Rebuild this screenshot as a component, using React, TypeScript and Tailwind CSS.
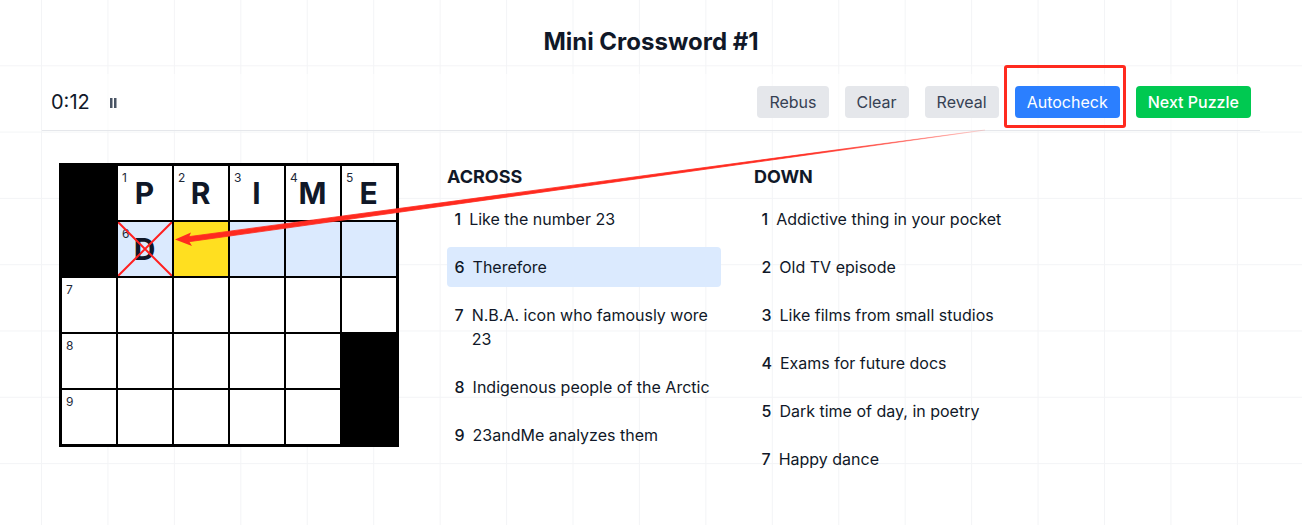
const across = [
  [1, 'Like the number 23'],
  [6, 'Therefore'],
  [7, 'N.B.A. icon who famously wore 23'],
  [8, 'Indigenous people of the Arctic'],
  [9, '23andMe analyzes them'],
] as const;

const down = [
  [1, 'Addictive thing in your pocket'],
  [2, 'Old TV episode'],
  [3, 'Like films from small studios'],
  [4, 'Exams for future docs'],
  [5, 'Dark time of day, in poetry'],
  [7, 'Happy dance'],
] as const;

type Cell = { black?: boolean; num?: number; letter?: string; tone?: 'word' | 'active'; crossed?: boolean };

const cells: Cell[] = [
  { black: true },
  { num: 1, letter: 'P' },
  { num: 2, letter: 'R' },
  { num: 3, letter: 'I' },
  { num: 4, letter: 'M' },
  { num: 5, letter: 'E' },
  { black: true },
  { num: 6, letter: 'D', tone: 'word', crossed: true },
  { tone: 'active' },
  { tone: 'word' },
  { tone: 'word' },
  { tone: 'word' },
  { num: 7 },
  {},
  {},
  {},
  {},
  {},
  { num: 8 },
  {},
  {},
  {},
  {},
  { black: true },
  { num: 9 },
  {},
  {},
  {},
  {},
  { black: true },
];

function GridCell({ cell }: { cell: Cell }) {
  if (cell.black) return <div className="h-14 w-14 border border-black bg-black" />;
  const bg = cell.tone === 'word' ? 'bg-blue-100' : cell.tone === 'active' ? 'bg-yellow-300' : 'bg-white';
  return (
    <div className={`relative flex h-14 w-14 items-center justify-center border border-black pr-px text-[30px] font-bold text-gray-900 ${bg}`}>
      {cell.num && <span className="absolute left-1 top-1 text-xs leading-4 font-normal text-gray-800">{cell.num}</span>}
      {cell.letter}
      {cell.crossed && (
        <svg className="absolute inset-0" width="54" height="54" viewBox="0 0 54 54">
          <path d="M0 0L54 54M54 0L0 54" stroke="#ff2020" strokeWidth="2" />
        </svg>
      )}
    </div>
  );
}

function ClueList({ title, clues, active }: { title: string; clues: readonly (readonly [number, string])[]; active?: number }) {
  return (
    <div className="w-[274px]">
      <h2 className="mb-2 text-lg leading-7 font-bold text-gray-900">{title}</h2>
      <ul className="flex flex-col gap-2">
        {clues.map(([n, text]) => (
          <li key={n} className={`flex rounded py-2 pr-2 pl-[7.5px] text-base leading-6 text-gray-900 ${n === active ? 'bg-blue-100' : ''}`}>
            <span className="mr-2 font-medium">{n}</span>
            <span>{text}</span>
          </li>
        ))}
      </ul>
    </div>
  );
}

export default function App() {
  return (
    <div className="relative h-screen overflow-hidden bg-white bg-[linear-gradient(to_right,#f3f4f6_1px,transparent_1px),linear-gradient(to_bottom,#f3f4f6_1px,transparent_1px)] bg-[size:66.44px_66.3px] bg-[position:41px_-1px] font-['Inter',sans-serif]">
      <h1 className="pt-6 text-center text-2xl leading-9 font-bold text-gray-900">Mini Crossword #1</h1>

      <div className="mx-[42px] mt-[14px] flex h-[57px] items-center justify-between border-b border-gray-200 bg-white/60 pr-[9px] pl-[9px]">
        <div className="flex items-center gap-5">
          <span className="text-xl text-gray-900">0:12</span>
          <svg className="mt-[2px]" width="7" height="10" viewBox="0 0 7 10">
            <path d="M0 0H2.5V10H0ZM4 0H6.5V10H4Z" fill="#4a5565" />
          </svg>
        </div>
        <div className="flex gap-4">
          <button className="rounded bg-gray-200 px-3 py-1 text-base text-gray-700">Rebus</button>
          <button className="rounded bg-gray-200 px-3 py-1 text-base text-gray-700">Clear</button>
          <button className="rounded bg-gray-200 px-3 py-1 text-base text-gray-700">Reveal</button>
          <button className="rounded bg-blue-500 px-3 py-1 text-base text-white">Autocheck</button>
          <button className="rounded bg-green-500 px-3 py-1 text-base font-medium text-white">Next Puzzle</button>
        </div>
      </div>

      <div className="mt-8 ml-[59px] flex items-start">
        <div className="grid w-[340px] grid-cols-6 border-2 border-black">
          {cells.map((cell, i) => (
            <GridCell key={i} cell={cell} />
          ))}
        </div>
        <div className="ml-12 flex gap-[33px]">
          <ClueList title="ACROSS" clues={across} active={6} />
          <ClueList title="DOWN" clues={down} />
        </div>
      </div>

      {/* annotation drawn over the screenshot */}
      <div className="absolute left-[1004px] top-[65px] h-[63px] w-[122px] rounded-[3px] border-[3px] border-[#ff2a1f]" />
      <svg className="pointer-events-none absolute inset-0" width="1302" height="525">
        <defs>
          <linearGradient id="tail" gradientUnits="userSpaceOnUse" x1="985" y1="130" x2="800" y2="155">
            <stop offset="0" stopColor="#ff2a1f" stopOpacity="0.1" />
            <stop offset="1" stopColor="#ff2a1f" />
          </linearGradient>
        </defs>
        <path d="M985 130L186 237L187 242Z" fill="url(#tail)" stroke="url(#tail)" strokeWidth="0.8" />
        <path d="M175 239.5L191 232.5L188 239.5L192 246Z" fill="#ff2a1f" />
      </svg>
    </div>
  );
}
